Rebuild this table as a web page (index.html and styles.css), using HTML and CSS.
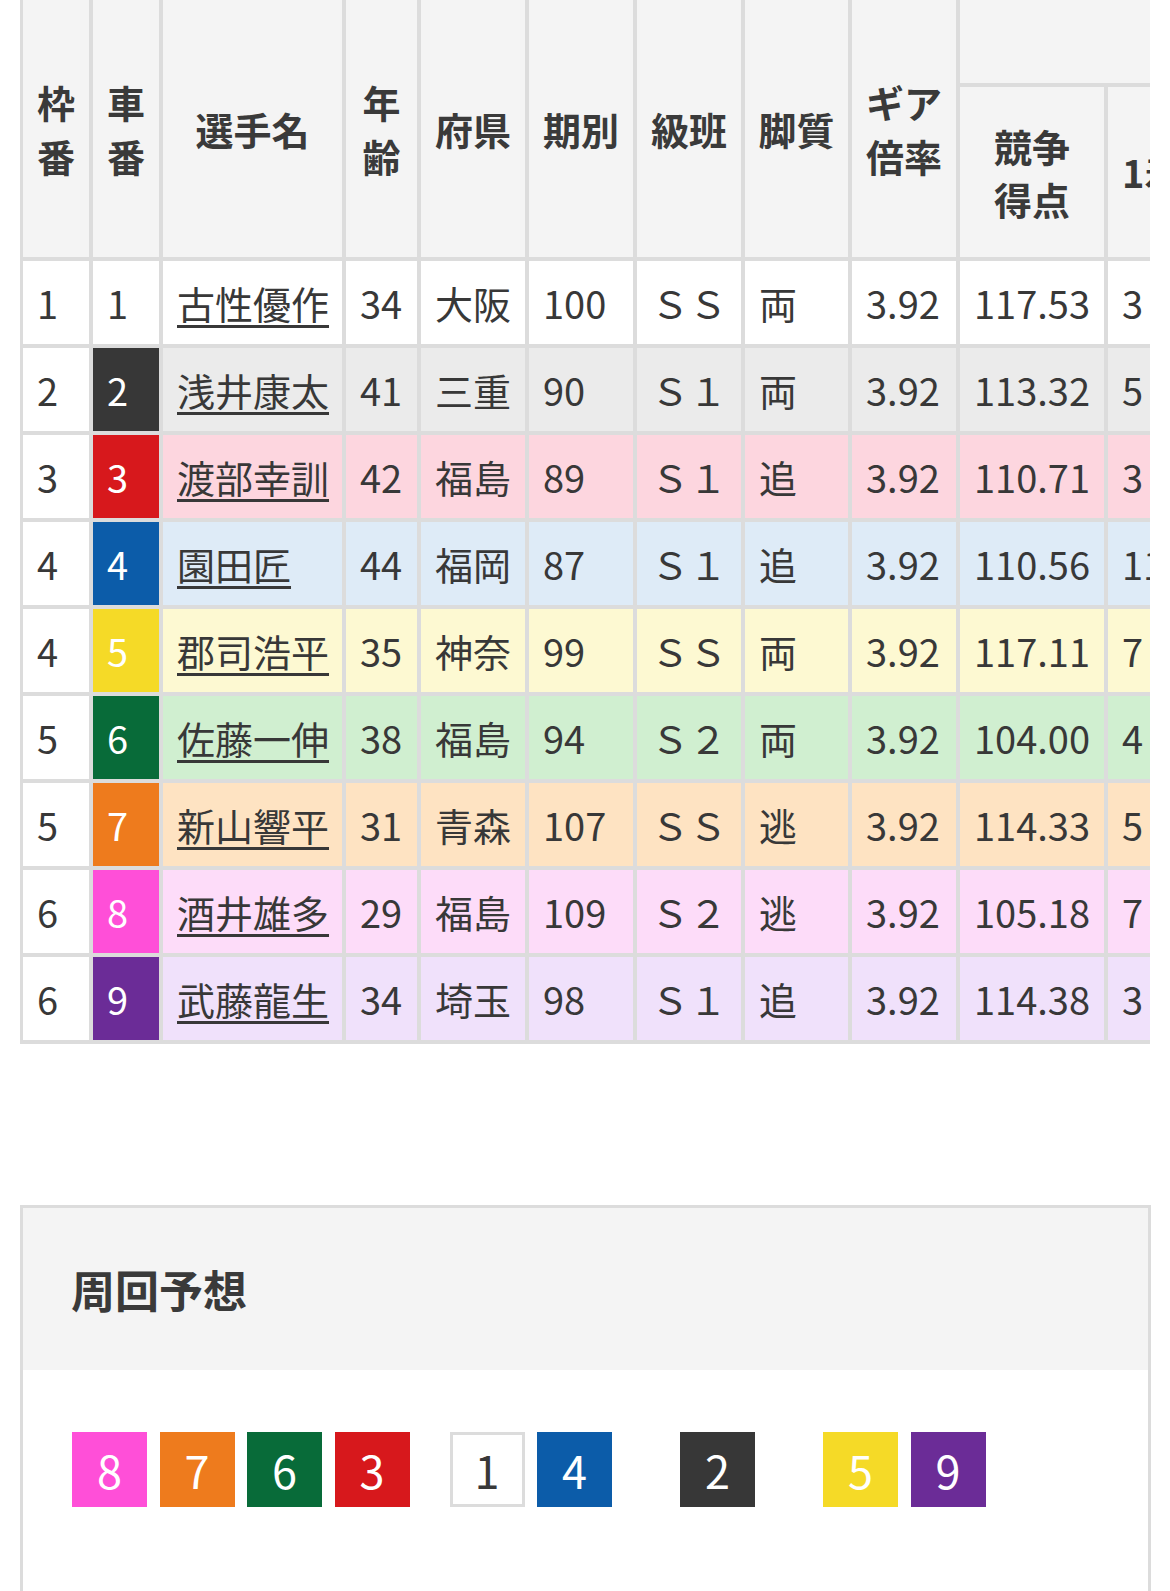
FILE: index.html
```html
<!DOCTYPE html>
<html lang="ja">
<head>
<meta charset="utf-8">
<title>出走表</title>
<link rel="stylesheet" href="styles.css">
</head>
<body>
<div class="tbl-wrap">
  <table class="entry">
    <colgroup>
      <col class="c-waku"><col class="c-sha"><col class="c-name"><col class="c-age"><col class="c-pref">
      <col class="c-ki"><col class="c-kyu"><col class="c-kyaku"><col class="c-gear"><col class="c-score">
      <col class="c-res"><col class="c-res">
    </colgroup>
    <thead>
      <tr class="h1">
        <th rowspan="2">枠<br>番</th>
        <th rowspan="2">車<br>番</th>
        <th rowspan="2">選手名</th>
        <th rowspan="2">年<br>齢</th>
        <th rowspan="2">府県</th>
        <th rowspan="2">期別</th>
        <th rowspan="2">級班</th>
        <th rowspan="2">脚質</th>
        <th rowspan="2">ギア<br>倍率</th>
        <th colspan="3" class="group"></th>
      </tr>
      <tr class="h2">
        <th>競争<br>得点</th>
        <th class="res-h">1着</th>
        <th class="res-h">2着</th>
      </tr>
    </thead>
    <tbody>
      <tr class="r1"><td>1</td><td class="car car1">1</td><td><a href="#">古性優作</a></td><td>34</td><td>大阪</td><td>100</td><td>ＳＳ</td><td>両</td><td class="num">3.92</td><td>117.53</td><td>3</td><td></td></tr>
      <tr class="r2"><td>2</td><td class="car car2">2</td><td><a href="#">浅井康太</a></td><td>41</td><td>三重</td><td>90</td><td>Ｓ１</td><td>両</td><td class="num">3.92</td><td>113.32</td><td>5</td><td></td></tr>
      <tr class="r3"><td>3</td><td class="car car3">3</td><td><a href="#">渡部幸訓</a></td><td>42</td><td>福島</td><td>89</td><td>Ｓ１</td><td>追</td><td class="num">3.92</td><td>110.71</td><td>3</td><td></td></tr>
      <tr class="r4"><td>4</td><td class="car car4">4</td><td><a href="#">園田匠</a></td><td>44</td><td>福岡</td><td>87</td><td>Ｓ１</td><td>追</td><td class="num">3.92</td><td>110.56</td><td>11</td><td></td></tr>
      <tr class="r5"><td>4</td><td class="car car5">5</td><td><a href="#">郡司浩平</a></td><td>35</td><td>神奈</td><td>99</td><td>ＳＳ</td><td>両</td><td class="num">3.92</td><td>117.11</td><td>7</td><td></td></tr>
      <tr class="r6"><td>5</td><td class="car car6">6</td><td><a href="#">佐藤一伸</a></td><td>38</td><td>福島</td><td>94</td><td>Ｓ２</td><td>両</td><td class="num">3.92</td><td>104.00</td><td>4</td><td></td></tr>
      <tr class="r7"><td>5</td><td class="car car7">7</td><td><a href="#">新山響平</a></td><td>31</td><td>青森</td><td>107</td><td>ＳＳ</td><td>逃</td><td class="num">3.92</td><td>114.33</td><td>5</td><td></td></tr>
      <tr class="r8"><td>6</td><td class="car car8">8</td><td><a href="#">酒井雄多</a></td><td>29</td><td>福島</td><td>109</td><td>Ｓ２</td><td>逃</td><td class="num">3.92</td><td>105.18</td><td>7</td><td></td></tr>
      <tr class="r9"><td>6</td><td class="car car9">9</td><td><a href="#">武藤龍生</a></td><td>34</td><td>埼玉</td><td>98</td><td>Ｓ１</td><td>追</td><td class="num">3.92</td><td>114.38</td><td>3</td><td></td></tr>
    </tbody>
  </table>
</div>

<section class="lap">
  <h2 class="lap-title">周回予想</h2>
  <div class="lap-body">
    <div class="line">
      <div class="grp">
        <span class="chip car8">8</span><span class="chip car7">7</span><span class="chip car6">6</span><span class="chip car3">3</span>
      </div>
      <div class="grp g2">
        <span class="chip car1">1</span><span class="chip car4">4</span>
      </div>
      <div class="grp g3">
        <span class="chip car2">2</span>
      </div>
      <div class="grp g4">
        <span class="chip car5">5</span><span class="chip car9">9</span>
      </div>
    </div>
  </div>
</section>
</body>
</html>
```

FILE: styles.css
```css
html, body {
  margin: 0;
  padding: 0;
  background: #ffffff;
}
body {
  font-family: "Noto Sans CJK JP", "Noto Sans", sans-serif;
  color: #383838;
}

.tbl-wrap {
  margin-left: 20px;
  width: 1130px;
  overflow: hidden;
}

.entry {
  table-layout: fixed;
  border-collapse: separate;
  border-spacing: 0;
  width: 1304px;
  border-left: 3px solid #dcdcdc;
  font-size: 38px;
}

.c-waku { width: 70px; }
.c-sha { width: 70px; }
.c-name { width: 183px; }
.c-age { width: 75px; }
.c-pref { width: 108px; }
.c-ki { width: 108px; }
.c-kyu { width: 108px; }
.c-kyaku { width: 107px; }
.c-gear { width: 108px; }
.c-score { width: 148px; }
.c-res { width: 108px; }

.entry th,
.entry td {
  box-sizing: border-box;
  border-right: 4px solid #dcdcdc;
  border-bottom: 4px solid #dcdcdc;
  padding: 0;
  white-space: nowrap;
  overflow: hidden;
}

.entry th {
  background: #f4f4f4;
  font-weight: 700;
  text-align: center;
  line-height: 1.4;
  color: #3a3a3a;
}
.entry th.res-h {
  text-align: left;
  padding-left: 14px;
}

.entry tr.h1 { height: 87px; }
.entry tr.h2 { height: 174px; }

.entry tbody tr { height: 87px; }

.entry td {
  padding-left: 14px;
  text-align: left;
  vertical-align: middle;
  line-height: 1.2;
}

.entry td a {
  color: #383838;
  text-decoration: underline;
  text-decoration-thickness: 3px;
  text-underline-offset: 6px;
}

.entry td:first-child { background: #ffffff; }

.r1 td { background: #ffffff; }
.r2 td { background: #ebebeb; }
.r3 td { background: #fdd6df; }
.r4 td { background: #deebf7; }
.r5 td { background: #fdf9d2; }
.r6 td { background: #d0efd0; }
.r7 td { background: #fee3c2; }
.r8 td { background: #fddcf9; }
.r9 td { background: #f0e1fb; }

.car { color: #ffffff; }
.entry td.car1, .chip.car1 { background: #ffffff; color: #383838; }
.entry td.car2, .chip.car2 { background: #373737; }
.entry td.car3, .chip.car3 { background: #d7181c; }
.entry td.car4, .chip.car4 { background: #0c5ca9; }
.entry td.car5, .chip.car5 { background: #f5da27; }
.entry td.car6, .chip.car6 { background: #086b39; }
.entry td.car7, .chip.car7 { background: #ee7b1d; }
.entry td.car8, .chip.car8 { background: #ff4fd8; }
.entry td.car9, .chip.car9 { background: #6b2c97; }

.lap {
  margin: 161px 19px 0 20px;
  border: 3px solid #dcdcdc;
  border-bottom: none;
}

.lap-title {
  margin: 0;
  height: 162px;
  box-sizing: border-box;
  background: #f4f4f4;
  display: flex;
  align-items: center;
  padding-left: 48px;
  font-size: 44px;
  font-weight: 700;
  color: #3a3a3a;
}

.lap-body {
  padding: 62px 49px 140px;
  background: #ffffff;
}

.line {
  display: flex;
  align-items: center;
}

.grp {
  display: flex;
  gap: 12.5px;
}
.grp.g2 { margin-left: 40px; }
.grp.g3 { margin-left: 68px; }
.grp.g4 { margin-left: 68px; }

.chip {
  box-sizing: border-box;
  width: 75px;
  height: 75px;
  display: flex;
  align-items: center;
  justify-content: center;
  color: #ffffff;
  font-size: 45px;
  line-height: 1;
}
.chip.car1 {
  border: 3px solid #dcdcdc;
}
```
